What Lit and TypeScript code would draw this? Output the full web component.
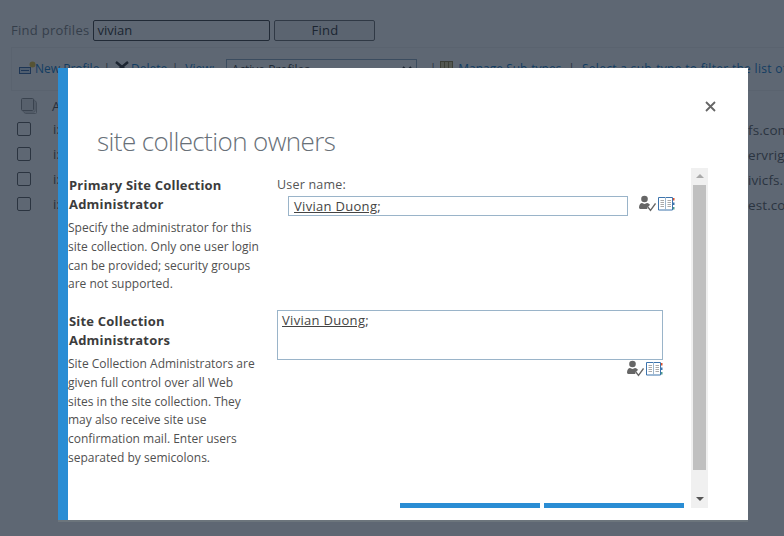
import { LitElement, html, css, svg } from "lit";
import { customElement } from "lit/decorators.js";

const checkIcon = svg`<svg class="ic" width="17" height="17" viewBox="0 0 17 17"><circle cx="5.500" cy="4" r="3.300" fill="#666"/><path d="M0 12.500c0-2.500 1.500-4.500 3-4.500l2.500 1L8 8c1.500 0 2.500 1 3 2l-3 2.500.5 1.500H2c-1 0-2-.5-2-1.500z" fill="#666"/><path d="M8.500 11.500l3 4L16.500 8.500" fill="none" stroke="#666" stroke-width="1.300"/></svg>`;
const bookIcon = svg`<svg class="ic" width="17" height="14" viewBox="0 0 17 14"><path d="M7 .5H.5v12.500H7" fill="#fff" stroke="#3d74ad"/><path d="M8 .5h6.500V13H8" fill="#fff" stroke="#3d74ad"/><path d="M7.500 0v14" stroke="#9db6cd"/><path d="M2.500 3.500h3.500M2.500 5.500h3.500M2.500 7.500h3.500M2.500 9.500h3.500M9.500 3.500h3.500M9.500 5.500h3.500M9.500 7.500h3.500M9.500 9.500h3.500" stroke="#a9a9a9"/><rect x="15" y="1" width="1.500" height="2.500" fill="#d9512c"/><rect x="15" y="5.500" width="1.500" height="2.500" fill="#3d74ad"/><rect x="15" y="10" width="1.500" height="2.500" fill="#4f9a8c"/></svg>`;
const newIcon = svg`<svg width="17" height="14" viewBox="0 0 17 14"><rect x=".5" y="6.500" width="11" height="6" fill="#cfe0f2" stroke="#2a5d99"/><path d="M2 9.500h8" stroke="#2a5d99"/><circle cx="13.500" cy="3.500" r="3" fill="#e4bb2c"/></svg>`;
const delIcon = svg`<svg width="14" height="12" viewBox="0 0 14 12"><path d="M1 1l12 10M13 1L1 11" stroke="#222" stroke-width="2.500"/></svg>`;
const manageIcon = svg`<svg width="15" height="14" viewBox="0 0 15 14"><rect x=".5" y=".5" width="12" height="13" fill="#d9c88d" stroke="#8c7a36"/><path d="M4.500 1v12M8.500 1v12" stroke="#8c7a36"/><path d="M11 13l4-5" stroke="#8a3f6f" stroke-width="2"/></svg>`;
const stackIcon = svg`<svg width="16" height="16" viewBox="0 0 16 16"><rect x="3.500" y="3.500" width="12" height="12" rx="1" fill="none" stroke="#aaa"/><rect x="2" y="2" width="12" height="12" rx="1" fill="#fff" stroke="#aaa"/><rect x=".5" y=".5" width="12" height="12" rx="1" fill="#e8e8e8" stroke="#888"/></svg>`;
const chevron = svg`<svg class="chev" width="10" height="6" viewBox="0 0 10 6"><path d="M1 1l4 4 4-4" fill="none" stroke="#222" stroke-width="1.800"/></svg>`;

@customElement("app-root")
export class AppRoot extends LitElement {
  static styles = css`
    :host { display: block; position: relative; width: 784px; height: 536px; overflow: hidden; font-family: "Open Sans", "Noto Sans", sans-serif; background: #fff; }
    .page { height: 536px; color: #444; font-size: 13px; }
    .find { display: flex; align-items: center; gap: 4px; padding: 19px 0 0 11px; height: 22px; letter-spacing: .28px; }
    .find label { color: #777; }
    .fi { width: 172px; height: 19px; border: 1px solid #333; border-radius: 2px; padding-left: 3px; line-height: 19px; letter-spacing: 0; color: #222; }
    .fb { width: 99px; height: 19px; border: 1px solid #666; border-radius: 2px; text-align: center; line-height: 19px; background: #f6f6f6; color: #222; }
    .bar { display: flex; gap: 6px; margin: 6px 0 0 11px; height: 44px; padding: 12px 0 0 7px; border: 1px solid #f2f2f2; border-right: 0; white-space: nowrap; color: #0072c6; font-size: 12px; box-sizing: border-box; overflow: hidden; }
    .bar svg { margin-top: 1px; flex: none; }
    .bar .sep { color: #555; margin: 0 -1px 0 -2px; }
    .bar .sepv { margin: 0 1px 0 -1.500px; }
    .bar .sepm { margin: 0 1px 0 1px; }
    .bar .nr { margin-right: -7px; }
    .bar .nrd { margin-right: -4px; }
    .bar .nrm { margin: 0 -3px 0 -1px; }
    .bar .wide { letter-spacing: .3px; }
    .sel { display: flex; justify-content: space-between; align-items: center; width: 191px; height: 20px; border: 1px solid #8aa3bd; padding: 0 4px 0 5px; color: #333; box-sizing: border-box; margin: -1px 9px 0 5px; flex: none; }
    .bar .chev { margin-top: 0; }
    .rows { padding: 4px 0 0 17px; }
    .hdr { display: flex; align-items: center; height: 21px; padding-left: 4px; }
    .hdr span { margin-left: 15px; }
    .row { display: flex; align-items: center; height: 25px; }
    .cb { width: 12px; height: 12px; border: 1px solid #555; border-radius: 2px; margin-right: 22px; }
    .fill { flex: 1; }
    .tail { width: 36px; overflow: hidden; white-space: nowrap; font-size: 13.500px; letter-spacing: .1px; color: #555; padding-top: 3px; }
    .veil { position: absolute; inset: 0; background: rgba(26, 38, 55, .7); }
    .dlg { position: absolute; left: 58px; top: 68px; width: 690px; height: 452px; background: #fff; border-left: 10px solid #2a8dd4; box-sizing: border-box; box-shadow: 0 2px 0 #6c757c; color: #444; font-size: 12px; }
    .x { position: absolute; left: 637px; top: 33px; }
    h1 { margin: 0; padding: 56px 0 0 29px; height: 44px; box-sizing: content-box; font-size: 26px; font-weight: 300; line-height: 34px; color: #687078; letter-spacing: -.6px; }
    .scroller { position: absolute; left: 0; top: 100px; right: 42px; bottom: 12px; display: grid; grid-template-columns: 209px 1fr; grid-template-rows: 136px 1fr; }
    .sb { position: absolute; left: 623px; top: 100px; width: 17px; height: 340px; background: #f0f0f0; }
    .thumb { position: absolute; left: 2px; width: 13px; top: 17px; height: 285px; background: #c0c0c0; }
    .up, .dn { position: absolute; left: 5px; width: 0; height: 0; border: 4px solid transparent; }
    .up { top: 6px; border-bottom: 4px solid #aaa; border-top: 0; }
    .dn { bottom: 7px; border-top: 4px solid #555; border-bottom: 0; }
    .sec { padding-top: 8px; }
    .sec h3 { margin: 0 0 5px; font-size: 13px; line-height: 19px; font-weight: 700; letter-spacing: .2px; color: #3c3c3c; padding-left: 1px; }
    .sec p { margin: 0; line-height: 18.800px; width: 192px; color: #505050; }
    .lbl { font-size: 12.500px; line-height: 18px; padding-top: 8px; color: #555; letter-spacing: .2px; }
    .uinput { display: flex; align-items: flex-start; margin: 2px 0 0 11px; gap: 11px; }
    .box { width: 340px; height: 20px; border: 1px solid #9ab4c9; box-sizing: border-box; padding-left: 5px; line-height: 19px; font-size: 13px; letter-spacing: .3px; }
    .icons { display: flex; gap: 2px; align-items: center; margin-top: -1px; }
    .area { width: 386px; height: 50px; border: 1px solid #9ab4c9; box-sizing: border-box; padding-left: 4px; font-size: 13px; line-height: 18px; margin-top: 6px; letter-spacing: .3px; }
    .ai { width: 386px; display: flex; justify-content: flex-end; padding-top: 1px; }
    .btns { position: absolute; left: 332px; top: 435px; display: flex; gap: 4px; }
    .btn { width: 140px; height: 5px; background: #2a8dd4; }
  `;
  render() {
    const rows = ["fs.com", "ervrig", "ivicfs.", "est.co"];
    return html`
      <div class="page">
        <div class="find"><label>Find profiles</label><div class="fi">vivian</div><div class="fb">Find</div></div>
        <div class="bar">
          <span class="nr">${newIcon}</span><span>New Profile</span><span class="sep">|</span>
          <span class="nrd">${delIcon}</span><span>Delete</span><span class="sep sepv">|</span>
          <span>View:</span><div class="sel">Active Profiles${chevron}</div><span class="sep">|</span>
          <span class="nrm">${manageIcon}</span><span>Manage Sub-types</span><span class="sep sepm">|</span>
          <span class="wide">Select a sub-type to filter the list of</span>
        </div>
        <div class="rows">
          <div class="hdr">${stackIcon}<span>A</span></div>
          ${rows.map((t) => html`<div class="row"><div class="cb"></div><span>i:</span><div class="fill"></div><div class="tail">${t}</div></div>`)}
        </div>
      </div>
      <div class="veil"></div>
      <div class="dlg" role="dialog">
        <svg class="x" width="11" height="11" viewBox="0 0 11 11"><path d="M1 1l9 9M10 1l-9 9" stroke="#666" stroke-width="1.800"/></svg>
        <h1>site collection owners</h1>
        <div class="scroller">
          <div class="sec"><h3>Primary Site Collection Administrator</h3><p>Specify the administrator for this site collection. Only one user login can be provided; security groups are not supported.</p></div>
          <div>
            <div class="lbl">User name:</div>
            <div class="uinput"><div class="box"><u>Vivian Duong</u>;</div><div class="icons">${checkIcon}${bookIcon}</div></div>
          </div>
          <div class="sec"><h3>Site Collection<br />Administrators</h3><p>Site Collection Administrators are given full control over all Web sites in the site collection. They may also receive site use confirmation mail. Enter users separated by semicolons.</p></div>
          <div>
            <div class="area"><u>Vivian Duong</u>;</div>
            <div class="ai"><div class="icons">${checkIcon}${bookIcon}</div></div>
          </div>
        </div>
        <div class="sb"><div class="up"></div><div class="thumb"></div><div class="dn"></div></div>
        <div class="btns"><div class="btn"></div><div class="btn"></div></div>
      </div>
    `;
  }
}
